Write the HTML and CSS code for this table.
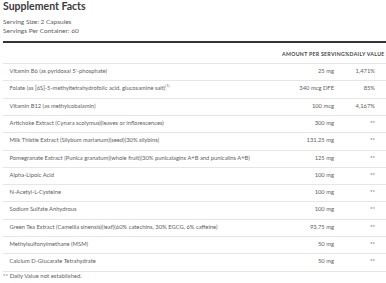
FILE: index.html
```html
<!DOCTYPE html>
<html lang="en">
<head>
    <meta charset="UTF-8">
    <meta name="viewport" content="width=device-width, initial-scale=1.0">
    <title>Supplement Facts</title>
    <link rel="stylesheet" href="styles.css">
</head>
<body>
    <h1>Supplement Facts</h1>
    <div class="serving">
        <p>Serving Size: 2 Capsules</p>
        <p>Servings Per Container: 60</p>
    </div>

    <table class="facts">
        <colgroup>
            <col class="col-name">
            <col class="col-amount">
            <col class="col-dv">
        </colgroup>
        <thead>
            <tr>
                <th></th>
                <th class="amount">Amount Per Serving</th>
                <th class="dv">%Daily Value</th>
            </tr>
        </thead>
        <tbody>
            <tr><td>Vitamin B6 (as pyridoxal 5'-phosphate)</td><td class="amount">25 mg</td><td class="dv">1,471%</td></tr>
            <tr><td>Folate (as [6S]-5-methyltetrahydrofolic acid, glucosamine salt)<sup>[1]</sup></td><td class="amount">340 mcg DFE</td><td class="dv">85%</td></tr>
            <tr><td>Vitamin B12 (as methylcobalamin)</td><td class="amount">100 mcg</td><td class="dv">4,167%</td></tr>
            <tr><td>Artichoke Extract (Cynara scolymus)(leaves or inflorescences)</td><td class="amount">300 mg</td><td class="dv">**</td></tr>
            <tr><td>Milk Thistle Extract (Silybum marianum)(seed)(30% silybins)</td><td class="amount">131.25 mg</td><td class="dv">**</td></tr>
            <tr><td>Pomegranate Extract (Punica granatum)(whole fruit)(30% punicalagins A+B and punicalins A+B)</td><td class="amount">125 mg</td><td class="dv">**</td></tr>
            <tr><td>Alpha-Lipoic Acid</td><td class="amount">100 mg</td><td class="dv">**</td></tr>
            <tr><td>N-Acetyl-L-Cysteine</td><td class="amount">100 mg</td><td class="dv">**</td></tr>
            <tr><td>Sodium Sulfate Anhydrous</td><td class="amount">100 mg</td><td class="dv">**</td></tr>
            <tr><td>Green Tea Extract (Camellia sinensis)(leaf)(60% catechins, 30% EGCG, 6% caffeine)</td><td class="amount">93.75 mg</td><td class="dv">**</td></tr>
            <tr><td>Methylsulfonylmethane (MSM)</td><td class="amount">50 mg</td><td class="dv">**</td></tr>
            <tr><td>Calcium D-Glucarate Tetrahydrate</td><td class="amount">50 mg</td><td class="dv">**</td></tr>
        </tbody>
    </table>

    <p class="footnote">** Daily Value not established.</p>
</body>
</html>
```

FILE: styles.css
```css
body {
    font-family: 'Lato', 'Liberation Sans', sans-serif;
    margin: 0;
    padding: 0 0 0 3px;
    color: #5e5e5e;
    background: #fff;
    overflow: hidden;
}

h1 {
    font-size: 10.5px;
    font-weight: 700;
    line-height: 12px;
    margin: 0;
    color: #3a3a3a;
}

.serving {
    margin-top: 5px;
    padding-bottom: 5.5px;
    border-bottom: 2px solid #333;
}

.serving p {
    margin: 0;
    font-size: 6.5px;
    line-height: 9.3px;
}

.facts {
    width: 383px;
    table-layout: fixed;
    border-collapse: collapse;
    font-size: 5.8px;
}

.col-amount {
    width: 75px;
}

.col-dv {
    width: 41px;
}

.facts th {
    font-size: 5.2px;
    font-weight: 700;
    letter-spacing: 0.3px;
    text-transform: uppercase;
    color: #444;
    line-height: 8px;
    padding: 7px 0 5px;
    text-align: right;
    white-space: nowrap;
    border-bottom: 1px solid #e6e6e6;
}

.facts th.dv {
    padding-right: 8px;
}

.facts td {
    line-height: 9px;
    padding: 2px 0 5.3px 6.5px;
    border-bottom: 1px solid #e6e6e6;
    white-space: nowrap;
    vertical-align: top;
}

.facts td.amount,
.facts td.dv {
    text-align: right;
    padding-left: 0;
    padding-right: 11px;
}

.facts sup {
    font-size: 3.6px;
    line-height: 0;
    vertical-align: 3px;
}

.footnote {
    margin: 0;
    font-size: 6px;
    line-height: 8px;
}
```
